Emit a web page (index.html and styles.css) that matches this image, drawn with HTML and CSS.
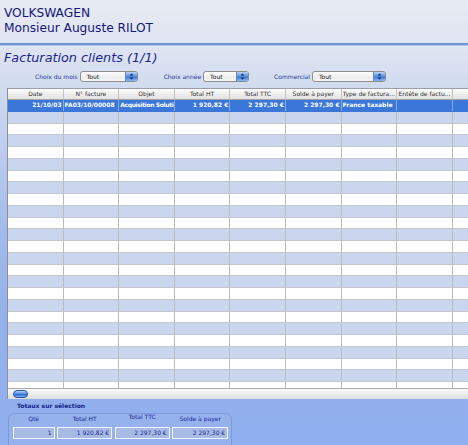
FILE: index.html
```html
<!DOCTYPE html>
<html lang="fr">
<head>
<meta charset="utf-8">
<title>Facturation clients</title>
<link rel="stylesheet" href="styles.css">
</head>
<body>
<header class="client">
  <div>VOLKSWAGEN</div>
  <div>Monsieur Auguste RILOT</div>
</header>
<div class="rule"></div>
<h1 class="title">Facturation clients (1/1)</h1>
<div class="filters">
  <span class="filter-label">Choix du mois</span>
  <div class="select sel-mois"><span class="sel-text">Tout</span><span class="stepper"><svg width="11" height="9" viewBox="0 0 11 9"><path d="M3.5 3.6 L5.5 1.4 L7.5 3.6 Z M3.5 5.4 L5.5 7.6 L7.5 5.4 Z" fill="#1b2650"/></svg></span></div>
  <span class="filter-label gap">Choix année</span>
  <div class="select sel-annee"><span class="sel-text">Tout</span><span class="stepper"><svg width="11" height="9" viewBox="0 0 11 9"><path d="M3.5 3.6 L5.5 1.4 L7.5 3.6 Z M3.5 5.4 L5.5 7.6 L7.5 5.4 Z" fill="#1b2650"/></svg></span></div>
  <span class="filter-label gap2">Commercial</span>
  <div class="select sel-com"><span class="sel-text">Tout</span><span class="stepper"><svg width="11" height="9" viewBox="0 0 11 9"><path d="M3.5 3.6 L5.5 1.4 L7.5 3.6 Z M3.5 5.4 L5.5 7.6 L7.5 5.4 Z" fill="#1b2650"/></svg></span></div>
</div>

<div class="table-frame">
  <div class="table">
    <div class="row head">
      <span>Date</span><span>N° facture</span><span>Objet</span><span>Total HT</span><span>Total TTC</span><span>Solde à payer</span><span>Type de factura...</span><span>Entête de factu...</span><span>Cond</span>
    </div>
    <div class="rows">
      <div class="row selected">
        <span class="r">21/10/03</span><span>FA03/10/00008</span><span class="tight">Acquisition Soluti</span><span class="r">1 920,82 €</span><span class="r">2 297,30 €</span><span class="r">2 297,30 €</span><span>France taxable</span><span></span><span></span>
      </div>
      <div class="row"><span></span><span></span><span></span><span></span><span></span><span></span><span></span><span></span><span></span></div>
      <div class="row"><span></span><span></span><span></span><span></span><span></span><span></span><span></span><span></span><span></span></div>
      <div class="row"><span></span><span></span><span></span><span></span><span></span><span></span><span></span><span></span><span></span></div>
      <div class="row"><span></span><span></span><span></span><span></span><span></span><span></span><span></span><span></span><span></span></div>
      <div class="row"><span></span><span></span><span></span><span></span><span></span><span></span><span></span><span></span><span></span></div>
      <div class="row"><span></span><span></span><span></span><span></span><span></span><span></span><span></span><span></span><span></span></div>
      <div class="row"><span></span><span></span><span></span><span></span><span></span><span></span><span></span><span></span><span></span></div>
      <div class="row"><span></span><span></span><span></span><span></span><span></span><span></span><span></span><span></span><span></span></div>
      <div class="row"><span></span><span></span><span></span><span></span><span></span><span></span><span></span><span></span><span></span></div>
      <div class="row"><span></span><span></span><span></span><span></span><span></span><span></span><span></span><span></span><span></span></div>
      <div class="row"><span></span><span></span><span></span><span></span><span></span><span></span><span></span><span></span><span></span></div>
      <div class="row"><span></span><span></span><span></span><span></span><span></span><span></span><span></span><span></span><span></span></div>
      <div class="row"><span></span><span></span><span></span><span></span><span></span><span></span><span></span><span></span><span></span></div>
      <div class="row"><span></span><span></span><span></span><span></span><span></span><span></span><span></span><span></span><span></span></div>
      <div class="row"><span></span><span></span><span></span><span></span><span></span><span></span><span></span><span></span><span></span></div>
      <div class="row"><span></span><span></span><span></span><span></span><span></span><span></span><span></span><span></span><span></span></div>
      <div class="row"><span></span><span></span><span></span><span></span><span></span><span></span><span></span><span></span><span></span></div>
      <div class="row"><span></span><span></span><span></span><span></span><span></span><span></span><span></span><span></span><span></span></div>
      <div class="row"><span></span><span></span><span></span><span></span><span></span><span></span><span></span><span></span><span></span></div>
      <div class="row"><span></span><span></span><span></span><span></span><span></span><span></span><span></span><span></span><span></span></div>
      <div class="row"><span></span><span></span><span></span><span></span><span></span><span></span><span></span><span></span><span></span></div>
      <div class="row"><span></span><span></span><span></span><span></span><span></span><span></span><span></span><span></span><span></span></div>
      <div class="row"><span></span><span></span><span></span><span></span><span></span><span></span><span></span><span></span><span></span></div>
      <div class="row"><span></span><span></span><span></span><span></span><span></span><span></span><span></span><span></span><span></span></div>
    </div>
  </div>
  <div class="hscroll"><div class="thumb"></div></div>
</div>

<section class="totals">
  <div class="totals-label">Totaux sur sélection</div>
  <div class="totals-box">
    <span class="tl">Qté</span><span class="tl">Total HT</span><span class="tl up">Total TTC</span><span class="tl">Solde à payer</span>
    <span class="field">1</span><span class="field">1 920,82 €</span><span class="field">2 297,30 €</span><span class="field">2 297,30 €</span>
  </div>
</section>
</body>
</html>
```
FILE: styles.css
```css
html, body {
  margin: 0;
  padding: 0;
}
body {
  width: 468px;
  height: 445px;
  overflow: hidden;
  font-family: "DejaVu Sans", "Noto Sans", sans-serif;
  background: linear-gradient(to bottom, #e6eaf3 0px, #dfe5f1 45px, #d3ddf0 80px, #c3d1ee 130px, #a3bbeb 230px, #93b0eb 320px, #90afee 445px);
}

.client {
  padding: 6px 4px 0;
  font-size: 12.2px;
  line-height: 15px;
  color: #15167a;
}

.rule {
  margin-top: 7px;
  height: 2px;
  background: #7192d5;
  box-shadow: 0 1px 0 #b7c7ea;
}

.title {
  margin: 4.5px 0 0 4px;
  font-size: 12.8px;
  font-weight: normal;
  font-style: italic;
  line-height: 16px;
  color: #1c2590;
}

.filters {
  display: flex;
  align-items: center;
  height: 11px;
  margin-top: 5.5px;
  padding-left: 35px;
  font-size: 6px;
}
.filter-label {
  color: #25339a;
  margin-right: 2px;
  white-space: nowrap;
}
.filter-label.gap {
  margin-left: 26px;
}
.filter-label.gap2 {
  margin-left: 25px;
}
.select {
  display: flex;
  align-items: center;
  box-sizing: border-box;
  height: 11px;
  border: 1px solid #8c8c8c;
  border-radius: 3px;
  background: linear-gradient(to bottom, #ffffff, #ececec 60%, #f8f8f8);
  overflow: hidden;
}
.sel-mois { width: 58px; }
.sel-annee { width: 46px; }
.sel-com { width: 74px; }
.sel-text {
  flex: 1;
  padding-left: 6px;
  color: #222;
  font-size: 6px;
}
.stepper {
  width: 11px;
  height: 9px;
  display: flex;
  background: linear-gradient(to bottom, #b6d3f7, #5d95e4 45%, #3f7ad6 55%, #86b8f1);
  border-left: 1px solid #6b86b8;
}

.table-frame {
  margin: 6px 0 0 7px;
  border-left: 1px solid #8b8f99;
}
.table {
  height: 300px;
  overflow: hidden;
  background: #ffffff;
  border-top: 1px solid #9a9ea8;
  box-sizing: border-box;
}
.row {
  display: grid;
  grid-template-columns: repeat(9, 55.6px);
  height: 11.75px;
  box-sizing: border-box;
  border-bottom: 1px solid #c3c6cc;
  font-size: 6px;
  line-height: 10px;
}
.row span {
  border-right: 1px solid #b9bbbf;
  overflow: hidden;
  white-space: nowrap;
  padding: 0 1px;
}
.row .r {
  text-align: right;
}
.row .tight {
  letter-spacing: -0.35px;
}
.row.head {
  height: 11px;
  background: linear-gradient(to bottom, #fdfdfd, #eeeeee 50%, #e2e2e2);
  border-bottom: 1px solid #a4a4a4;
  color: #333;
  line-height: 10px;
}
.row.head span {
  text-align: center;
  border-right-color: #c4c4c4;
}
.rows .row:nth-child(even) {
  background: #c9d6ee;
}
.row.selected {
  background: #3a77d9;
  color: #ffffff;
  font-weight: bold;
  border-bottom-color: #3a77d9;
}
.row.selected span {
  border-right-color: #86a9e6;
}

.hscroll {
  height: 11px;
  box-sizing: border-box;
  border-top: 1px solid #a9abb0;
  background: linear-gradient(to bottom, #fafafa, #ececec 50%, #dcdcdc);
  padding: 1px 0 0 4.7px;
}
.thumb {
  width: 15px;
  height: 8px;
  box-sizing: border-box;
  border-radius: 4px;
  border: 1px solid #2a559e;
  background: linear-gradient(to bottom, #b7d6fa, #4b86dc 50%, #2f6bd0 60%, #79b0f0);
}

.totals {
  margin: 3px 0 0 8px;
}
.totals-label {
  padding-left: 9px;
  font-size: 6px;
  font-weight: bold;
  line-height: 8px;
  color: #16228a;
}
.totals-box {
  margin-top: 3px;
  width: 224px;
  height: 40px;
  box-sizing: border-box;
  border: 1px solid #7b9ad9;
  border-radius: 6px;
  background: #95b2ec;
  padding: 1px 0 0 3.7px;
  display: grid;
  grid-template-columns: 42px 55px 55px 56px;
  grid-template-rows: 8px 12px;
  column-gap: 2.5px;
  row-gap: 3.5px;
  font-size: 6px;
  color: #1b2892;
}
.tl {
  text-align: center;
  line-height: 8px;
}
.tl.up {
  position: relative;
  top: -2px;
}
.field {
  box-sizing: border-box;
  border: 1.5px solid #f4f7fd;
  background: #a7bbe5;
  text-align: right;
  padding-right: 2px;
  line-height: 9px;
  white-space: nowrap;
}
```
